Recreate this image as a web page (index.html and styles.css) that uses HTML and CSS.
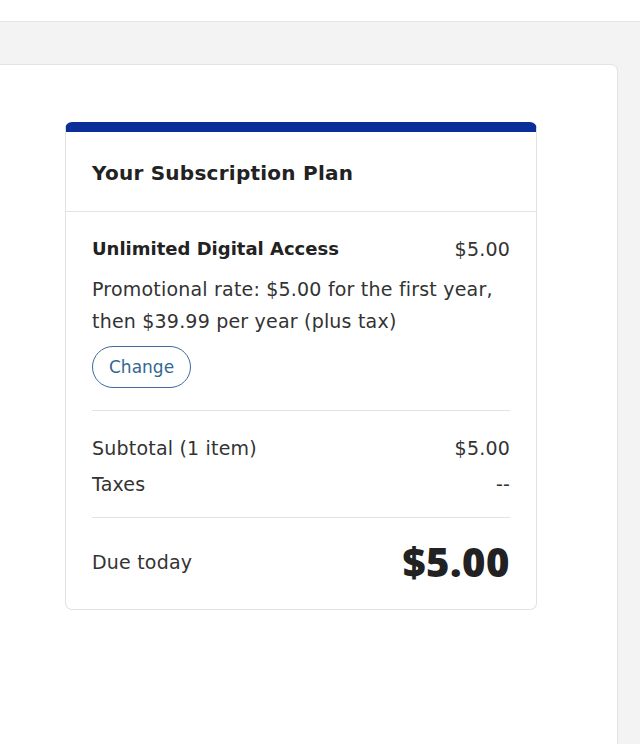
FILE: index.html
```html
<!DOCTYPE html>
<html lang="en">
  <head>
    <meta charset="UTF-8" />
    <title>Checkout</title>
    <link rel="stylesheet" href="styles.css">
  </head>
  <body>
    <div class="topbar"></div>
    <div class="main">
      <div class="panel">
        <!-- Plan summary -->
        <div class="card">
          <div class="card-head">
            <h2>Your Subscription Plan</h2>
          </div>
          <div class="card-body">
            <div class="row plan">
              <span>Unlimited Digital Access</span>
              <span class="price">$5.00</span>
            </div>
            <p class="promo">
              Promotional rate: $5.00 for the first year,<br />then $39.99 per
              year (plus tax)
            </p>
            <button class="change">Change</button>

            <div class="totals">
              <div class="row">
                <span>Subtotal (1 item)</span>
                <span>$5.00</span>
              </div>
              <div class="row">
                <span>Taxes</span>
                <span>--</span>
              </div>
            </div>

            <div class="due row">
              <span>Due today</span>
              <span class="due-amount">$5.00</span>
            </div>
          </div>
        </div>
      </div>
    </div>
  </body>
</html>
```

FILE: styles.css
```css
body {
  font-family: "DejaVu Sans", Arial, sans-serif;
  background: #f3f3f3;
  color: #333;
  margin: 0;
  height: 744px;
  overflow: hidden;
}
.topbar {
  height: 21px;
  background: #fff;
  border-bottom: 1px solid #e6e6e6;
}
.main {
  padding-top: 42px;
}
.panel {
  background: #fff;
  margin-left: -10px;
  width: 628px;
  height: 700px;
  border: 1px solid #e2e2e2;
  border-radius: 0 7px 0 0;
  padding: 57px 0 0 74px;
  box-sizing: border-box;
}
.card {
  width: 472px;
  box-sizing: border-box;
  border: 1px solid #e2e2e2;
  border-top: 10px solid #0b2f98;
  border-radius: 7px;
}
.card-head {
  padding: 26px 26px 23px;
  border-bottom: 1px solid #e2e2e2;
}
.card-head h2 {
  margin: 0;
  font-size: 20px;
  line-height: 30px;
  font-weight: 700;
  letter-spacing: 0.25px;
  color: #222;
}
.card-body {
  padding: 23px 26px 24px;
}
.row {
  display: flex;
  justify-content: space-between;
  align-items: center;
  font-size: 19px;
  line-height: 30px;
  letter-spacing: 0.2px;
}
.plan {
  line-height: 28px;
  font-weight: 700;
  font-size: 18px;
  letter-spacing: 0;
  color: #222;
}
.plan .price {
  font-weight: 400;
  font-size: 19px;
  letter-spacing: 0.2px;
  color: #333;
}
.promo {
  margin: 10px 0 0;
  font-size: 19px;
  line-height: 32px;
  letter-spacing: 0.2px;
}
.change {
  margin-top: 9px;
  height: 42px;
  padding: 0 16px;
  font-family: inherit;
  font-size: 17px;
  color: #326891;
  background: #fff;
  border: 1px solid #3f6aa0;
  border-radius: 21px;
  cursor: pointer;
}
.totals {
  margin-top: 22px;
  border-top: 1px solid #e2e2e2;
  border-bottom: 1px solid #e2e2e2;
  padding: 22px 0 18px;
  display: flex;
  flex-direction: column;
  gap: 6px;
}
.due {
  padding-top: 21px;
  line-height: 46px;
}
.due-amount {
  font-family: "Open Sans", Arial, sans-serif;
  font-size: 40px;
  font-weight: 800;
  letter-spacing: 0.5px;
  color: #222;
}
```
